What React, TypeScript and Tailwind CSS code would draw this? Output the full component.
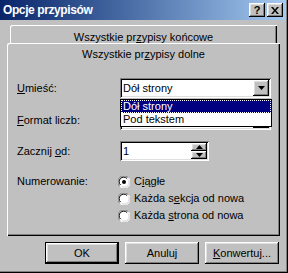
import React from 'react';

const raised =
  'shadow-[inset_-1px_-1px_0_#000,inset_1px_1px_0_#fff,inset_-2px_-2px_0_#808080,inset_2px_2px_0_#dfdfdf]';
const sunken =
  'shadow-[inset_1px_1px_0_#808080,inset_-1px_-1px_0_#fff,inset_2px_2px_0_#000,inset_-2px_-2px_0_#dfdfdf]';

function Arrow({ up = false }: { up?: boolean }) {
  return (
    <svg width="7" height="4" viewBox="0 0 7 4">
      <polygon points={up ? '3.5,0 7,4 0,4' : '0,0 7,0 3.5,4'} fill="#000" />
    </svg>
  );
}

function Combo({ value }: { value?: string }) {
  return (
    <div className={`relative flex h-[20px] w-[151px] items-center bg-white pl-[3px] ${sunken}`}>
      {value && <span>{value}</span>}
      <div className={`absolute right-[2px] top-[2px] flex h-[16px] w-[16px] items-center justify-center bg-[#c0c0c0] ${raised}`}>
        <Arrow />
      </div>
    </div>
  );
}

function Radio({ checked, children }: { checked?: boolean; children: React.ReactNode }) {
  return (
    <div className="flex h-[17px] items-center">
      <svg width="12" height="12" viewBox="0 0 12 12" className="ml-[1px]">
        <circle cx="6" cy="6" r="5.5" fill="#fff" />
        <path d="M1.5 10 A5.5 5.5 0 0 1 10 1.5" stroke="#808080" strokeWidth="1" fill="none" />
        <path d="M2.5 9 A4.3 4.3 0 0 1 9 2.5" stroke="#000" strokeWidth="1" fill="none" />
        <path d="M10.5 2 A5.5 5.5 0 0 1 2 10.5" stroke="#fff" strokeWidth="1" fill="none" />
        <path d="M9.5 3 A4.3 4.3 0 0 1 3 9.5" stroke="#dfdfdf" strokeWidth="1" fill="none" />
        {checked && <circle cx="6" cy="6" r="2" fill="#000" />}
      </svg>
      <span className="ml-[4px]">{children}</span>
    </div>
  );
}

export default function App() {
  return (
    <div className="flex h-[273px] w-[288px] flex-col bg-[#c0c0c0] font-['Liberation_Sans',Arial,sans-serif] text-[11px] leading-[13px] text-black shadow-[inset_-1px_-1px_0_#000,inset_-2px_-2px_0_#808080]">
      {/* Title bar */}
      <div className="flex h-[20px] w-[286px] shrink-0 items-center bg-gradient-to-r from-[#0a246a] to-[#a6caf0] pl-[3px] pr-[3px]">
        <span className="text-[12px] font-bold tracking-[-0.4px] text-white">Opcje przypisów</span>
        <div className="ml-auto flex gap-[2px]">
          <div className={`flex h-[14px] w-[16px] items-center justify-center bg-[#c0c0c0] text-[11px] font-bold ${raised}`}>?</div>
          <div className={`flex h-[14px] w-[16px] items-center justify-center bg-[#c0c0c0] ${raised}`}>
            <svg width="8" height="7" viewBox="0 0 8 7">
              <path d="M0 0h2l2 2.5L6 0h2L5 3.5 8 7H6L4 4.5 2 7H0l3-3.5z" fill="#000" />
            </svg>
          </div>
        </div>
      </div>

      {/* Back tab row */}
      <div className="ml-[10px] mt-[5px] flex h-[19px] w-[267px] shrink-0 items-start justify-center rounded-tl-[2px] pt-[6px] shadow-[inset_1px_1px_0_#fff,inset_-1px_0_0_#000,inset_-2px_0_0_#808080]">
        <span>
          Wszystkie pr<u>z</u>ypisy końcowe
        </span>
      </div>

      {/* Front tab + panel */}
      <div className="relative -mt-px ml-[7px] flex h-[193px] w-[273px] shrink-0 flex-col rounded-tl-[2px] shadow-[inset_1px_1px_0_#fff,inset_-1px_-1px_0_#000,inset_-2px_-2px_0_#808080]">
        <div className="flex h-[18px] items-center justify-center pt-[5px]">
          <span>
            Wszystkie pr<u>z</u>ypisy dolne
          </span>
        </div>

        <div className="flex flex-col pl-[10px]">
          <div className="mt-[17px] flex h-[20px] items-center">
            <span className="w-[103px]">
              <u>U</u>mieść:
            </span>
            <Combo value="Dół strony" />
          </div>

          <div className="mt-[12px] flex h-[20px] items-center">
            <span className="w-[103px]">
              <u>F</u>ormat liczb:
            </span>
            <Combo />
          </div>

          <div className="mt-[11px] flex h-[20px] items-center">
            <span className="w-[103px]">
              Zacznij <u>o</u>d:
            </span>
            <div className={`relative flex h-[20px] w-[89px] items-center bg-white pl-[3px] ${sunken}`}>
              <span>1</span>
              <div className="absolute right-[2px] top-[2px] flex h-[16px] w-[16px] flex-col">
                <div className={`flex h-[8px] items-center justify-center bg-[#c0c0c0] ${raised}`}>
                  <Arrow up />
                </div>
                <div className={`flex h-[8px] items-center justify-center bg-[#c0c0c0] ${raised}`}>
                  <Arrow />
                </div>
              </div>
            </div>
          </div>

          <div className="mt-[12px] flex">
            <span className="flex h-[17px] w-[100px] items-center">Numerowanie:</span>
            <div className="flex flex-col">
              <Radio checked>
                C<u>i</u>ągłe
              </Radio>
              <Radio>
                Każda s<u>e</u>kcja od nowa
              </Radio>
              <Radio>
                Każda <u>s</u>trona od nowa
              </Radio>
            </div>
          </div>
        </div>

        {/* Open dropdown list */}
        <div className="absolute left-[113px] top-[56px] flex w-[152px] flex-col border border-black bg-white">
          <div className="flex h-[13px] items-center border border-dotted border-white bg-[#000080] pl-[1px] text-white">
            Dół strony
          </div>
          <div className="flex h-[13px] items-center pl-[2px]">Pod tekstem</div>
        </div>
      </div>

      {/* Buttons */}
      <div className="mt-[6px] flex justify-end gap-[6px] pr-[9px]">
        <div className="h-[22px] w-[74px] border border-black">
          <div className={`flex h-full w-full items-center justify-center ${raised}`}>OK</div>
        </div>
        <div className={`flex h-[22px] w-[74px] items-center justify-center ${raised}`}>Anuluj</div>
        <div className={`flex h-[22px] w-[74px] items-center justify-center ${raised}`}>
          <span>
            <u>K</u>onwertuj...
          </span>
        </div>
      </div>
    </div>
  );
}
